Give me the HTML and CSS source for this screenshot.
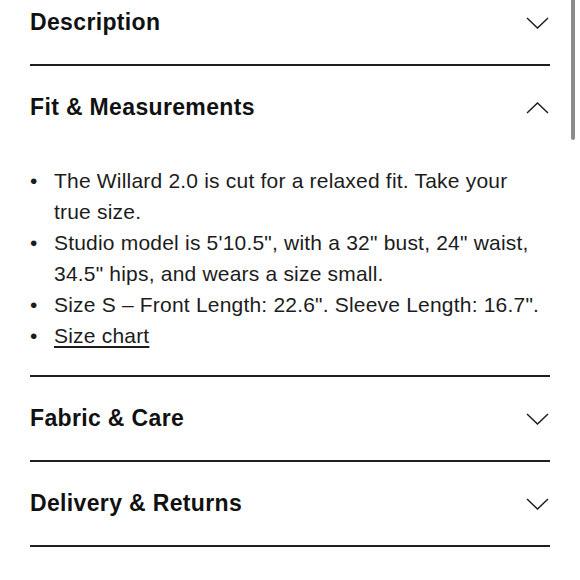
FILE: index.html
```html
<!DOCTYPE html>
<html lang="en">
<head>
<meta charset="utf-8">
<title>Product details</title>
<link rel="stylesheet" href="styles.css">
</head>
<body>
<div class="accordion">
  <section class="item">
    <div class="header">
      <h2 class="title">Description</h2>
      <svg class="chev" width="23" height="12" viewBox="0 0 23 12"><path d="M1 1 L11.5 11 L22 1"/></svg>
    </div>
  </section>
  <section class="item">
    <div class="header">
      <h2 class="title">Fit &amp; Measurements</h2>
      <svg class="chev" width="23" height="12" viewBox="0 0 23 12"><path d="M1 11 L11.5 1 L22 11"/></svg>
    </div>
    <div class="content">
      <ul class="list">
        <li>The Willard 2.0 is cut for a relaxed fit. Take your true size.</li>
        <li>Studio model is 5'10.5", with a 32" bust, 24" waist, 34.5" hips, and wears a size small.</li>
        <li>Size S – Front Length: 22.6". Sleeve Length: 16.7".</li>
        <li><a class="link" href="#">Size chart</a></li>
      </ul>
    </div>
  </section>
  <section class="item">
    <div class="header">
      <h2 class="title">Fabric &amp; Care</h2>
      <svg class="chev" width="23" height="12" viewBox="0 0 23 12"><path d="M1 1 L11.5 11 L22 1"/></svg>
    </div>
  </section>
  <section class="item">
    <div class="header">
      <h2 class="title">Delivery &amp; Returns</h2>
      <svg class="chev" width="23" height="12" viewBox="0 0 23 12"><path d="M1 1 L11.5 11 L22 1"/></svg>
    </div>
  </section>
</div>
<div class="scrollbar"></div>
</body>
</html>
```
FILE: styles.css
```css
html, body {
  margin: 0;
  padding: 0;
  background: #ffffff;
  overflow: hidden;
}
body {
  font-family: "Liberation Sans", Arial, sans-serif;
  color: #1c1c1c;
}
.accordion {
  margin-top: -19px;
  padding: 0 30px;
}
.item {
  border-bottom: 2px solid #1f1f1f;
}
.header {
  height: 83px;
  display: flex;
  align-items: center;
  justify-content: space-between;
}
.title {
  margin: 0;
  font-size: 23px;
  font-weight: 700;
  letter-spacing: 0.35px;
  color: #111111;
}
.chev {
  margin-right: 1px;
  display: block;
}
.chev path {
  fill: none;
  stroke: #1f1f1f;
  stroke-width: 1.5;
}
.content {
  padding: 16px 0 24px;
}
.list {
  list-style: none;
  margin: 0;
  padding: 0 6px 0 0;
  font-size: 21px;
  line-height: 31px;
  letter-spacing: 0.2px;
}
.list li {
  display: flex;
}
.list li::before {
  content: "\2022";
  flex: none;
  width: 24px;
}
.link {
  color: inherit;
  text-decoration: underline;
  text-decoration-thickness: 1.5px;
  text-underline-offset: 3px;
}
.scrollbar {
  position: fixed;
  top: 0;
  right: 5px;
  width: 4px;
  height: 140px;
  background: #8c8c8c;
  border-radius: 0 0 2px 2px;
}
```
